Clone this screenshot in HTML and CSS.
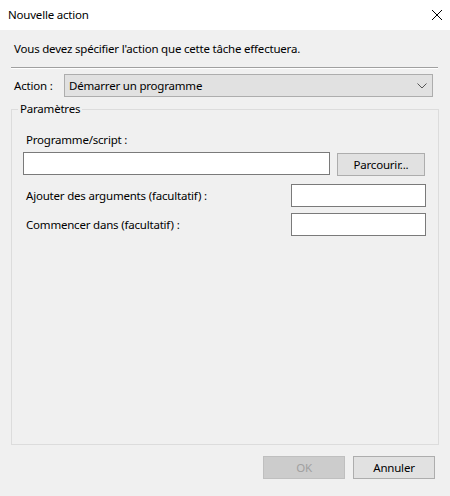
FILE: index.html
```html
<!DOCTYPE html>
<html lang="fr">
<head>
    <meta charset="UTF-8">
    <meta name="viewport" content="width=device-width, initial-scale=1.0">
    <title>Nouvelle action</title>
    <link rel="stylesheet" href="styles.css">
</head>
<body>
    <div class="titlebar">
        <span class="title">Nouvelle action</span>
        <button class="close" aria-label="Fermer">
            <svg width="12" height="12" viewBox="0 0 12 12">
                <path d="M1 1 L11 11 M11 1 L1 11" stroke="#000" stroke-width="1" fill="none"/>
            </svg>
        </button>
    </div>

    <div class="dialog">
        <p class="intro">Vous devez spécifier l'action que cette tâche effectuera.</p>
        <div class="separator"></div>

        <div class="action-row">
            <label for="action">Action :</label>
            <div class="select" id="action">
                <span>Démarrer un programme</span>
                <svg width="10" height="6" viewBox="0 0 10 6">
                    <path d="M0.5 0.5 L5 5 L9.5 0.5" stroke="#555" stroke-width="1" fill="none"/>
                </svg>
            </div>
        </div>

        <fieldset class="group">
            <legend>Paramètres</legend>
            <div class="group-body">
                <label class="field-label" for="program">Programme/script :</label>
                <div class="program-row">
                    <input type="text" id="program" class="text-input program-input">
                    <button class="btn browse">Parcourir...</button>
                </div>
                <div class="field-row args-row">
                    <label class="field-label" for="args">Ajouter des arguments (facultatif) :</label>
                    <input type="text" id="args" class="text-input short-input">
                </div>
                <div class="field-row start-row">
                    <label class="field-label" for="start">Commencer dans (facultatif) :</label>
                    <input type="text" id="start" class="text-input short-input">
                </div>
            </div>
        </fieldset>

        <div class="footer-buttons">
            <button class="btn" disabled>OK</button>
            <button class="btn">Annuler</button>
        </div>
    </div>
</body>
</html>
```

FILE: styles.css
```css
* {
    box-sizing: border-box;
}

body {
    margin: 0;
    width: 450px;
    height: 496px;
    font-family: 'Segoe UI', 'Noto Sans', sans-serif;
    font-size: 11.5px;
    letter-spacing: -0.2px;
    color: #000;
    background: #f0f0f0;
    overflow: hidden;
}

.titlebar {
    height: 30px;
    background: #fff;
    display: flex;
    align-items: center;
    justify-content: space-between;
    padding-left: 8px;
}

.title {
    padding-bottom: 1px;
}

.close {
    width: 26px;
    height: 30px;
    border: none;
    background: transparent;
    display: flex;
    align-items: center;
    justify-content: center;
    padding: 0;
}

.dialog {
    height: 466px;
    padding: 0 11px;
}

.intro {
    margin: 10px 0 0 3px;
    height: 18px;
    line-height: 18px;
}

.separator {
    margin-top: 9px;
    margin-right: 1px;
    border-top: 1px solid #a0a0a0;
    border-bottom: 1px solid #fff;
}

.action-row {
    margin-top: 5px;
    height: 23px;
    display: flex;
    align-items: center;
}

.action-row label {
    width: 53px;
    padding-left: 3px;
}

.select {
    width: 369px;
    height: 23px;
    background: #e1e1e1;
    border: 1px solid #adadad;
    display: flex;
    align-items: center;
    justify-content: space-between;
    padding: 0 5px 0 4px;
}

.group {
    margin: 4px 0 0;
    padding: 0;
    height: 344px;
    border: 1px solid #dcdcdc;
}

.group legend {
    margin-left: 6px;
    padding: 0 2px;
    line-height: 16px;
}

.group-body {
    padding: 0 12px 0 11px;
}

.field-label {
    display: block;
    padding-left: 3px;
    line-height: 18px;
}

.group-body > .field-label {
    margin-top: 14px;
}

.program-row {
    margin-top: 3px;
    display: flex;
    align-items: flex-start;
    gap: 7px;
}

.text-input {
    height: 23px;
    border: 1px solid #7a7a7a;
    background: #fff;
    margin: 0;
    font: inherit;
}

.program-input {
    width: 307px;
}

.btn {
    height: 23px;
    width: 82px;
    margin: 0;
    padding: 0;
    font: inherit;
    letter-spacing: inherit;
    color: #000;
    background: #e1e1e1;
    border: 1px solid #adadad;
}

.btn:disabled {
    color: #a0a0a0;
    background: #cccccc;
    border-color: #bfbfbf;
}

.browse {
    width: 88px;
    margin-top: 1px;
}

.field-row {
    display: flex;
    align-items: center;
    justify-content: space-between;
}

.args-row {
    margin-top: 8px;
}

.start-row {
    margin-top: 6px;
}

.short-input {
    width: 135px;
}

.footer-buttons {
    margin-top: 11px;
    padding-right: 4px;
    display: flex;
    justify-content: flex-end;
    gap: 8px;
}
```
